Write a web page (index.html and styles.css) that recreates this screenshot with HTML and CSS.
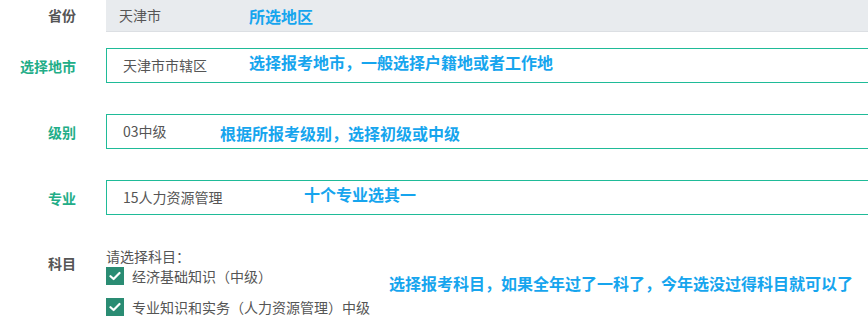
FILE: index.html
```html
<!DOCTYPE html>
<html lang="zh-CN">
<head>
    <meta charset="UTF-8">
    <title>报考信息</title>
    <link rel="stylesheet" href="styles.css">
</head>
<body>
    <form class="apply-form">
        <div class="row row-province">
            <label class="label">省份</label>
            <div class="field field-disabled">天津市</div>
            <span class="note note-province">所选地区</span>
        </div>

        <div class="row row-city">
            <label class="label label-green">选择地市</label>
            <div class="field">天津市市辖区</div>
            <span class="note note-city">选择报考地市，一般选择户籍地或者工作地</span>
        </div>

        <div class="row row-level">
            <label class="label label-green">级别</label>
            <div class="field">03中级</div>
            <span class="note note-level">根据所报考级别，选择初级或中级</span>
        </div>

        <div class="row row-major">
            <label class="label label-green">专业</label>
            <div class="field">15人力资源管理</div>
            <span class="note note-major">十个专业选其一</span>
        </div>

        <div class="row row-subject">
            <label class="label label-subject">科目</label>
            <div class="subjects">
                <p class="subjects-tip">请选择科目：</p>
                <div class="check-item">
                    <span class="check-box">
                        <svg width="12" height="10" viewBox="0 0 12 10"><path d="M1.5 5.2 L4.6 8 L10.5 2" fill="none" stroke="#fff" stroke-width="2.2" stroke-linecap="round" stroke-linejoin="round"/></svg>
                    </span>
                    <span>经济基础知识（中级）</span>
                </div>
                <div class="check-item">
                    <span class="check-box">
                        <svg width="12" height="10" viewBox="0 0 12 10"><path d="M1.5 5.2 L4.6 8 L10.5 2" fill="none" stroke="#fff" stroke-width="2.2" stroke-linecap="round" stroke-linejoin="round"/></svg>
                    </span>
                    <span>专业知识和实务（人力资源管理）中级</span>
                </div>
            </div>
            <span class="note note-subject">选择报考科目，如果全年过了一科了，今年选没过得科目就可以了</span>
        </div>
    </form>
</body>
</html>
```

FILE: styles.css
```css
body {
    margin: 0;
    padding: 0;
    background: #fff;
    font-family: "Noto Sans CJK SC", "Liberation Sans", sans-serif;
    color: #555;
    overflow: hidden;
}

.apply-form {
    width: 868px;
}

.row {
    position: relative;
    display: flex;
    align-items: center;
}

.label {
    width: 76px;
    padding-right: 30px;
    text-align: right;
    font-size: 14px;
    font-weight: 700;
    color: #555;
    line-height: 18px;
}

.label-green {
    color: #22ad87;
}

.field {
    flex: 1;
    box-sizing: border-box;
    height: 35px;
    border: 1px solid #1fbb98;
    border-right: none;
    padding-left: 16px;
    font-size: 14px;
    line-height: 33px;
    color: #555;
}

.field-disabled {
    height: 32px;
    border: none;
    border-bottom: 1px solid #dcdfe3;
    background: #e8ebee;
    padding-left: 13px;
    line-height: 31px;
}

.row-province .label {
    margin-top: -3px;
}

.row-city {
    margin-top: 16px;
}

.row-level,
.row-major {
    margin-top: 31px;
}

.row-subject {
    margin-top: 32px;
    align-items: flex-start;
}

.label-subject {
    margin-top: 7px;
}

.subjects {
    display: flex;
    flex-direction: column;
}

.subjects-tip {
    margin: 0 0 2px;
    font-size: 14px;
    line-height: 18px;
    color: #555;
}

.check-item {
    display: flex;
    align-items: center;
    gap: 8px;
    height: 18px;
    margin-bottom: 13px;
    font-size: 14px;
    color: #555;
}

.check-box {
    width: 18px;
    height: 18px;
    background: #2a8c73;
    display: flex;
    align-items: center;
    justify-content: center;
}

/* blue hand-written notes laid over the form */
.note {
    position: absolute;
    font-size: 16px;
    font-weight: 700;
    line-height: 20px;
    color: #16a5ee;
    white-space: nowrap;
}

.note-province {
    left: 249px;
    top: 6px;
}

.note-city {
    left: 249px;
    top: 4px;
}

.note-level {
    left: 220px;
    top: 9px;
}

.note-major {
    left: 304px;
    top: 4px;
}

.note-subject {
    left: 389px;
    top: 26px;
}
```
